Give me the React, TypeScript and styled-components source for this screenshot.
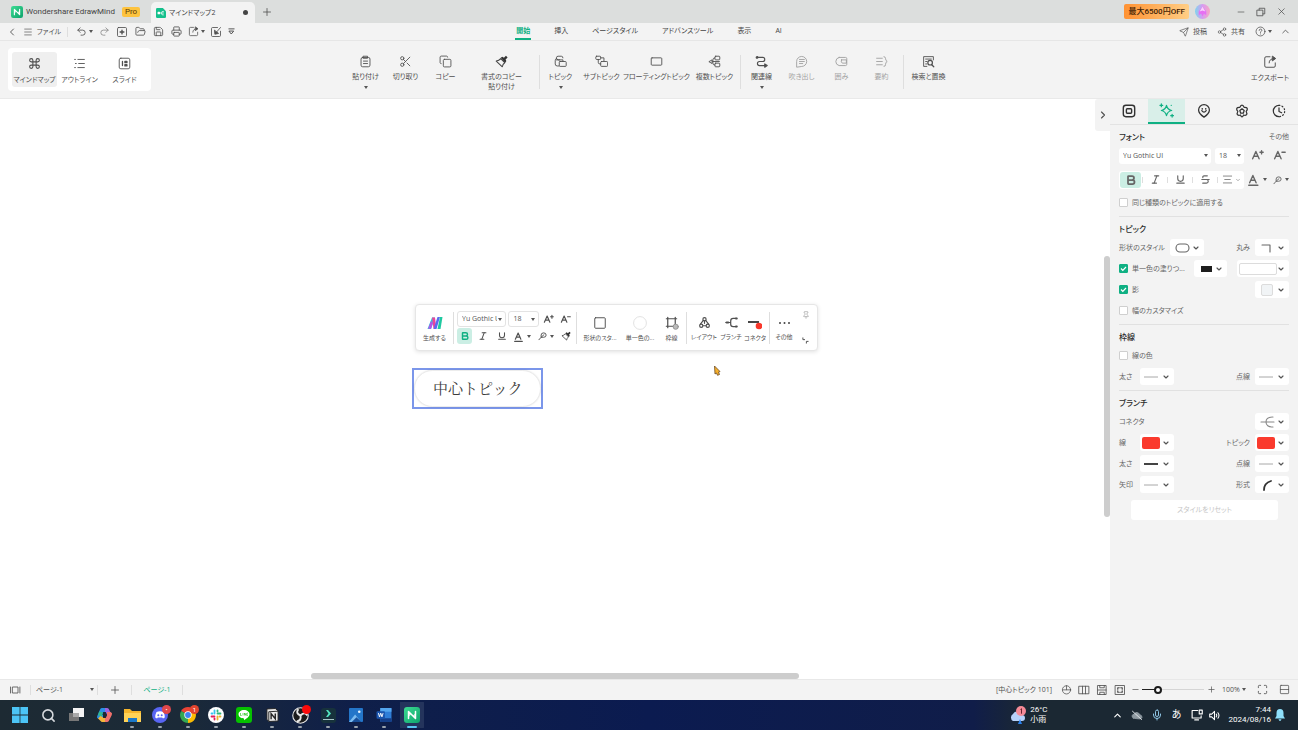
import React from "react";
import styled, { createGlobalStyle, css } from "styled-components";
import {
  ChevronLeft, ChevronRight, ChevronDown, ChevronUp, Menu, Undo2, Redo2, FolderOpen, Save, Printer,
  Command, Scissors, Copy, Send, Share2, Bold, Italic, Underline, Strikethrough, Plus, Minus, X,
  Search, Mic, Maximize, Pin,
} from "lucide-react";

const GlobalStyle = createGlobalStyle`
  *, *::before, *::after { box-sizing: border-box; }
  html, body { margin: 0; padding: 0; }
  body {
    font-family: "Open Sans", "Noto Sans CJK JP", sans-serif;
    font-feature-settings: "palt";
    font-size: 7px;
    line-height: 10px;
    color: #4f4f4f;
    overflow: hidden;
  }
  button, select, input { font: inherit; color: inherit; font-feature-settings: inherit; }
  button { border: 0; padding: 0; background: none; }
  svg { display: block; flex: none; }
`;

const GREEN = "#0fb083";
const COMPACT = `Roboto, "Noto Sans CJK JP", sans-serif`;

/* ---------- layout ---------- */
const Page = styled.div`
  display: flex;
  flex-direction: column;
  height: 100vh;
  background: #f3f3f3;
`;
const TitleBar = styled.header`
  display: flex;
  align-items: center;
  height: 23px;
  background: #dcdedd;
`;
const Spacer = styled.div`flex: 1;`;
const HomeTab = styled.button`
  display: flex;
  align-items: center;
  gap: 3px;
  width: 151px;
  height: 23px;
  padding-left: 11px;
  font-family: ${COMPACT};
  font-size: 8px;
  color: #444;
`;
const ProBadge = styled.span`
  margin-left: 4px;
  padding: 0 3px;
  border-radius: 2px;
  background: #fdc33f;
  color: #5b3a05;
`;
const DocTab = styled.button`
  display: flex;
  align-items: center;
  align-self: flex-end;
  gap: 3px;
  width: 104px;
  height: 21px;
  padding: 0 7px 0 5px;
  border-radius: 5px 5px 0 0;
  background: #f3f3f3;
  color: #444;
`;
const Dot = styled.i`
  width: 5px;
  height: 5px;
  margin-left: auto;
  border-radius: 50%;
  background: #444;
`;
const Promo = styled.button`
  height: 15px;
  padding: 0 4px;
  margin-right: 6px;
  border-radius: 2px;
  background: linear-gradient(90deg, #ff9233, #ffce85);
  color: #3d1c05;
  font-family: ${COMPACT};
  font-size: 8px;
  font-weight: 500;
  white-space: nowrap;
`;
const Avatar = styled.button`
  width: 15px;
  height: 15px;
  margin-right: 21px;
`;
const IconButton = styled.button<{ $w?: number; $h?: number; $on?: boolean }>`
  display: flex;
  align-items: center;
  justify-content: center;
  gap: 2px;
  width: ${(p) => p.$w ?? 18}px;
  height: ${(p) => p.$h ?? 16}px;
  flex: none;
  border-radius: 3px;
  white-space: nowrap;
  ${(p) => p.$on && css`background: #cbeee4;`}
`;
const MenuBar = styled.nav`
  display: grid;
  grid-template-columns: 1fr auto 1fr;
  height: 18px;
  border-bottom: 1px solid #e6e6e6;
`;
const Cluster = styled.div<{ $end?: boolean }>`
  display: flex;
  align-items: center;
  justify-content: ${(p) => (p.$end ? "flex-end" : "flex-start")};
  padding: 0 4px;
`;
const Rule = styled.i<{ $h?: number; $m?: number }>`
  width: 1px;
  height: ${(p) => p.$h ?? 10}px;
  margin: 0 ${(p) => p.$m ?? 0}px;
  background: #dedede;
  flex: none;
`;
const MenuTabs = styled.div`
  display: flex;
  gap: 22px;
`;
const MenuTab = styled.button<{ $on?: boolean }>`
  height: 17px;
  padding: 0 1px;
  border-bottom: 2px solid ${(p) => (p.$on ? GREEN : "transparent")};
  color: ${(p) => (p.$on ? GREEN : "#444")};
  font-weight: ${(p) => (p.$on ? 700 : 400)};
`;
const Ribbon = styled.div`
  display: grid;
  grid-template-columns: 1fr auto 1fr;
  height: 58px;
  border-bottom: 1px solid #e9e9e9;
`;
const ViewSwitch = styled.div`
  display: flex;
  align-self: center;
  justify-self: start;
  height: 43px;
  margin-left: 8px;
  padding: 4px;
  border-radius: 4px;
  background: #fff;
`;
const ViewButton = styled.button<{ $on?: boolean }>`
  display: flex;
  flex-direction: column;
  align-items: center;
  gap: 5px;
  width: 45px;
  padding-top: 5px;
  border-radius: 3px;
  background: ${(p) => (p.$on ? "#efefef" : "transparent")};
  white-space: nowrap;
`;
const Tools = styled.div<{ $end?: boolean }>`
  display: flex;
  align-items: flex-start;
  padding-top: 14px;
  ${(p) => p.$end && css`justify-self: end; padding-right: 4px;`}
`;
const Tool = styled.button<{ $w: number; $off?: boolean }>`
  display: flex;
  flex-direction: column;
  align-items: center;
  gap: 4px;
  width: ${(p) => p.$w}px;
  opacity: ${(p) => (p.$off ? 0.5 : 1)};
  white-space: nowrap;
`;
const Main = styled.main`
  display: flex;
  flex: 1;
  min-height: 0;
`;

/* ---------- canvas ---------- */
const Canvas = styled.section`
  position: relative;
  flex: 1;
  background: #fff;
  overflow: hidden;
`;
const CollapseTab = styled.button`
  position: absolute;
  top: 0;
  right: 0;
  display: flex;
  align-items: center;
  justify-content: center;
  width: 15px;
  height: 32px;
  border-radius: 3px 0 0 3px;
  background: #f3f3f3;
`;
const Thumb = styled.div<{ $vertical?: boolean }>`
  position: absolute;
  border-radius: 3px;
  background: #cdcdcd;
  ${(p) => p.$vertical
    ? css`right: 0; top: 27%; width: 6px; height: 45%;`
    : css`left: 28%; bottom: 0; width: 44%; height: 6px;`}
`;
const FloatBar = styled.div`
  position: absolute;
  left: 415px;
  top: 205px;
  display: flex;
  align-items: center;
  height: 47px;
  padding: 0 4px 0 0;
  border: 1px solid #e6e6e6;
  border-radius: 4px;
  background: #fff;
  box-shadow: 0 1px 4px rgba(0, 0, 0, 0.12);
`;
const FloatItem = styled.button<{ $w: number }>`
  display: flex;
  flex-direction: column;
  align-items: center;
  gap: 4px;
  width: ${(p) => p.$w}px;
  padding-top: 2px;
  font-size: 6px;
  line-height: 8px;
  white-space: nowrap;
`;
const FloatFont = styled.div`
  display: flex;
  flex-direction: column;
  gap: 1px;
  width: 122px;
  padding: 0 3px;
`;
const FloatLine = styled.div`
  display: flex;
  align-items: center;
  gap: 2px;
`;
const FloatCorner = styled.div`
  display: flex;
  flex-direction: column;
  gap: 18px;
  align-items: center;
  width: 15px;
`;
const Topic = styled.div`
  position: absolute;
  left: 412px;
  top: 269px;
  border: 2px solid #7b96ea;
`;
const Pill = styled.div`
  height: 37px;
  padding: 0 18px;
  border-radius: 19px;
  border: 1px solid #ececec;
  box-shadow: 0 0 2px rgba(0, 0, 0, 0.12);
  background: #fff;
  color: #3c3c3c;
  font-size: 15px;
  line-height: 36px;
  font-family: "Liberation Serif", "Noto Serif CJK JP", "Noto Sans CJK JP", serif;
  font-feature-settings: normal;
`;
const Cursor = styled.svg`
  position: absolute;
  left: 713px;
  top: 266px;
`;

/* ---------- side panel ---------- */
const Panel = styled.aside`
  width: 188px;
  flex: none;
  background: #f3f3f3;
`;
const PanelTabs = styled.div`
  display: grid;
  grid-template-columns: repeat(5, 1fr);
  height: 26px;
  border-bottom: 1px solid #e3e3e3;
`;
const PanelTab = styled.button<{ $on?: boolean }>`
  display: flex;
  align-items: center;
  justify-content: center;
  color: ${(p) => (p.$on ? GREEN : "#333")};
  background: ${(p) => (p.$on ? "#d9efe9" : "transparent")};
  border-bottom: 2px solid ${(p) => (p.$on ? GREEN : "transparent")};
`;
const Section = styled.section`
  margin: 0 9px;
  padding: 3px 0;
  & + & { border-top: 1px solid #e1e1e1; }
`;
const Heading = styled.h2`
  display: flex;
  align-items: center;
  justify-content: space-between;
  height: 17px;
  margin: 0;
  font-size: 8px;
  font-weight: 500;
  color: #2b2b2b;
`;
const More = styled.a`
  font-size: 7px;
  font-weight: 400;
  color: #666;
  text-decoration: none;
`;
const Row = styled.div<{ $gap?: number; $style?: boolean }>`
  display: flex;
  align-items: center;
  gap: ${(p) => p.$gap ?? 5}px;
  height: 21px;
  margin: ${(p) => (p.$style ? "3px 0 2px" : "0")};
  color: #666;
  white-space: nowrap;
`;
const Label = styled.span<{ $w?: number }>`
  min-width: ${(p) => p.$w ?? 0}px;
`;
const Check = styled.label<{ $w?: number }>`
  display: flex;
  align-items: center;
  gap: 4px;
  min-width: ${(p) => p.$w ?? 0}px;
`;
const Box = styled.input`
  appearance: none;
  width: 9px;
  height: 9px;
  margin: 0;
  border: 1px solid #cfcfcf;
  border-radius: 1px;
  background: #fff;
  &:checked {
    border-color: ${GREEN};
    background: ${GREEN} url("data:image/svg+xml,%3Csvg xmlns='http://www.w3.org/2000/svg' viewBox='0 0 9 9'%3E%3Cpath d='M2 4.5l1.8 1.8L7 3' fill='none' stroke='white' stroke-width='1.2'/%3E%3C/svg%3E") center / 9px no-repeat;
  }
`;
const Picker = styled.button<{ $w?: number }>`
  display: flex;
  align-items: center;
  justify-content: space-between;
  width: ${(p) => p.$w ?? 34}px;
  height: 17px;
  padding: 0 4px 0 2px;
  border-radius: 3px;
  background: #fff;
`;
const Swatch = styled.i<{ $c: string; $w?: number; $h?: number; $inset?: number; $line?: boolean }>`
  width: ${(p) => p.$w ?? 18}px;
  height: ${(p) => p.$h ?? 12}px;
  margin-left: ${(p) => p.$inset ?? 0}px;
  border-radius: ${(p) => (p.$h === 6 ? 0 : 2)}px;
  background: ${(p) => p.$c};
  border: ${(p) => (p.$line ? "1px solid #dcdcdc" : "0")};
`;
const SelectWrap = styled.span<{ $w: number; $line?: boolean; $clear?: boolean }>`
  display: grid;
  align-items: center;
  width: ${(p) => p.$w}px;
  height: 16px;
  border-radius: 3px;
  background: ${(p) => (p.$clear ? "none" : "#fff")};
  border: ${(p) => (p.$line ? "1px solid #e3e3e3" : "0")};
  & > * { grid-area: 1 / 1; }
  & > svg { justify-self: end; margin-right: 3px; pointer-events: none; }
`;
const Select = styled.select`
  appearance: none;
  width: 100%;
  height: 14px;
  border: 0;
  padding: 0 8px 0 4px;
  background: none;
  color: #555;
`;
const StyleGroup = styled.div`
  display: flex;
  align-items: center;
  width: 125px;
  height: 18px;
  padding: 0 1px;
  border-radius: 3px;
  background: #fff;
`;
const Reset = styled.button`
  display: block;
  width: 147px;
  height: 20px;
  margin: 5px 0 0 12px;
  border-radius: 3px;
  background: #fff;
  color: #c6c6c6;
`;

/* ---------- status bar and taskbar ---------- */
const StatusBar = styled.footer`
  display: flex;
  align-items: center;
  height: 21px;
  padding-bottom: 1px;
  border-top: 1px solid #e8e8e8;
`;
const PageTab = styled.button`
  width: 50px;
  color: ${GREEN};
`;
const Slider = styled.input`
  appearance: none;
  width: 62px;
  height: 9px;
  margin: 0 1px;
  background: linear-gradient(90deg, #222 0 25%, #d5d5d5 25%) center / 100% 1px no-repeat;
  &::-webkit-slider-thumb {
    appearance: none;
    width: 8px;
    height: 8px;
    border: 2px solid #1c1c1c;
    border-radius: 50%;
    background: #fff;
  }
`;
const TaskBar = styled.footer`
  display: flex;
  align-items: center;
  height: 30px;
  padding: 0 13px 0 6px;
  background: linear-gradient(90deg, #1d2a33 0, #1b2a38 14%, #0f1f49 27%, #0b1b50 50%, #101d49 75%, #1b2833 79%);
  color: #fff;
  font-family: ${COMPACT};
`;
const App16 = styled.button<{ $on?: boolean; $open?: boolean }>`
  position: relative;
  display: flex;
  align-items: center;
  justify-content: center;
  width: 28px;
  height: 26px;
  border-radius: 3px;
  background: ${(p) => (p.$on ? "linear-gradient(90deg, transparent 2px, #24345c 2px 26px, transparent 26px)" : "none")};
  &::after {
    content: "";
    position: absolute;
    bottom: 0;
    left: ${(p) => (p.$on ? 9 : 12)}px;
    right: ${(p) => (p.$on ? 9 : 12)}px;
    height: 2px;
    border-radius: 1px;
    background: ${(p) => (p.$on ? "#58c8f2" : p.$open ? "#9aa3ad" : "transparent")};
  }
`;
const Badge = styled.i<{ $c: string }>`
  position: absolute;
  top: 3px;
  right: 3px;
  width: 9px;
  height: 9px;
  border-radius: 50%;
  background: ${(p) => p.$c};
  color: #fff;
  font-size: 6px;
  line-height: 9px;
  font-style: normal;
  text-align: center;
`;
const Weather = styled.button`
  display: flex;
  align-items: center;
  gap: 4px;
  margin-right: 61px;
  font-size: 8px;
  text-align: left;
  color: #fff;
`;
const Clock = styled.div`
  margin: 0 4px 0 8px;
  font-size: 8px;
  text-align: right;
`;
const Ime = styled.span`
  width: 20px;
  font-size: 10px;
  text-align: center;
`;

/* ---------- drawings ---------- */
const L = { size: 11, strokeWidth: 1.8 };

function Line({ children, size = 13, sw = 1.1, vb = 16 }: { children: React.ReactNode; size?: number; sw?: number; vb?: number }) {
  return (
    <svg width={size} height={size} viewBox={`0 0 ${vb} ${vb}`} fill="none" stroke="currentColor" strokeWidth={sw} strokeLinejoin="round" strokeLinecap="round" aria-hidden>
      {children}
    </svg>
  );
}
const Caret = () => <svg width="4" height="3" viewBox="0 0 4 3" aria-hidden><path d="M0 0h4L2 3z" fill="#555" /></svg>;
const Chev = () => <ChevronDown size={8} strokeWidth={3.5} color="#555" />;
const Dash = ({ c = "#a8a8a8", h = 1 }: { c?: string; h?: number }) => (
  <svg width="18" height="4" viewBox="0 0 18 4" aria-hidden><path d="M2 2h14" stroke={c} strokeWidth={h} /></svg>
);
const EdrawLogo = ({ size = 12 }: { size?: number }) => (
  <svg width={size} height={size} viewBox="0 0 16 16" aria-hidden>
    <defs><linearGradient id="ed" x1="0" y1="0" x2="1" y2="1"><stop stopColor="#3ddc93" /><stop offset="1" stopColor="#0ea36c" /></linearGradient></defs>
    <rect width="16" height="16" rx="3" fill="url(#ed)" />
    <path d="M4.500 11.500v-7l7 7v-7" stroke="#fff" fill="none" strokeWidth="1.500" strokeLinejoin="round" strokeLinecap="round" /><path d="M4.500 5v5l2.500-2.500zM11.500 11V6L9 8.500z" fill="#fff" opacity=".75" />
  </svg>
);
const DocLogo = () => (
  <svg width="10" height="10" viewBox="0 0 16 16" aria-hidden>
    <path d="M2 0h9l5 5v9q0 2-2 2H2q-2 0-2-2V2Q0 0 2 0z" fill="#14c08c" />
    <rect x="2.500" y="6" width="4" height="4" rx="1" fill="#fff" /><path d="M6.500 8H9M12.500 5.500H11q-2 0-2 1.500v2.500q0 1.500 2 1.500h1.500M9 8h3.500" stroke="#fff" fill="none" strokeWidth="1.200" />
  </svg>
);
const NewIcon = () => <Line size={12}><rect x="2" y="2" width="12" height="12" rx="1.500" /><path d="M8 5.500v5M5.500 8h5" strokeWidth="1.800" /></Line>;
const ExportIcon = ({ size = 12 }: { size?: number }) => <Line size={size}><path d="M8 2H3.500Q2 2 2 3.500v9Q2 14 3.500 14h9q1.500 0 1.500-1.500V9M7 9q0-5 6-5" /><path d="M11 1.500L14.500 4 11 6.500z" fill="currentColor" /></Line>;
const ImportIcon = () => <Line size={12}><path d="M10 2H3.500Q2 2 2 3.500v9Q2 14 3.500 14h9q1.500 0 1.500-1.500V7M14 2L8 9" /><path d="M6 6l.5 5 4.500-1z" fill="currentColor" /></Line>;
const OutlineIcon = () => <Line><path d="M6 3h8M7 8h7M6 13h8M2 3h1M3 8h1M2 13h1" /></Line>;
const SlideIcon = () => <Line><rect x="1.500" y="1.500" width="13" height="13" rx="2" /><path d="M5.500 5.500v5M8.500 5.500h2.500v1.500H8.500zM8.500 9.500h2.500V11H8.500z" strokeWidth="1.600" /></Line>;
const PasteIcon = () => <Line><rect x="2.500" y="3" width="11" height="11.500" rx="2" /><path d="M5.500 1.500h5V4h-5zM5.500 7.500h5M5.500 10.500h5" /></Line>;
const BrushIcon = ({ size = 13 }: { size?: number }) => (
  <svg width={size} height={size} viewBox="0 0 16 16" aria-hidden><path d="M1.500 7.500Q5 7 7 4.500L12 9.500Q9.500 11 9 14.500z" fill="none" stroke="#444" strokeWidth="1.300" strokeLinejoin="round" /><path d="M7 3.500L9 2l2 1.500L13.500 1 15.500 3 13 5.500l1 2L12.500 9.500z" fill="#333" /></svg>
);
const TopicIcon = () => <Line><path d="M11 3.500Q11 1.500 9 1.500H5Q3 1.500 3 3.500T5 6h2M3 4Q1.500 5 1.500 7v4Q1.500 13.500 4 13.500h2" /><rect x="6.500" y="8" width="8.500" height="6" rx="1" /><path d="M3 6h8v2" /></Line>;
const SubIcon = () => <Line><rect x="1" y="1.500" width="6" height="4" rx="1" /><path d="M4 5.500V9q0 2 2 2h1M7 3.500h4V7" /><rect x="7" y="8" width="8.500" height="6" rx="1" /></Line>;
const FloatIcon = () => <Line><rect x="1.500" y="3.500" width="13" height="9" rx="1" /></Line>;
const MultiIcon = () => <Line><rect x="8.500" y="1.500" width="6" height="4.500" rx="1" /><rect x="8.500" y="10" width="6" height="4.500" rx="1" /><path d="M8.500 3.500Q6 3.500 6 6v4q0 2.500 2.500 2.500M6 8h8M1.500 8L5 6v4z" /></Line>;
const RelIcon = () => <Line sw={1.4}><path d="M3 3h6.500q2.500 0 2.500 2.500T9.500 8h-4Q3 8 3 10.500T5.500 13H13" /><circle cx="2.500" cy="3" r="1" fill="currentColor" /><path d="M12 11l3 2-3 2z" fill="currentColor" /></Line>;
const CallIcon = () => <Line><path d="M2 14.500V8a6.200 6.200 0 1 1 6.200 6.200zM5.500 5.500h6M5.500 8h6M5.500 10.500h4" /></Line>;
const RoundIcon = () => <Line><path d="M5 3h8q1.500 0 1.500 1.500v7Q14.500 13 13 13H5Q1 12 1 8t4-5z" /><path d="M8 6h6v4H9Q7 9 8 6z" /></Line>;
const SumIcon = () => <Line><path d="M2 4h7M2 8h7M2 12h7M11 2q2 0 2 2.500T15 8q-2 .5-2 3.500t-2 2.500" /></Line>;
const FindIcon = () => <Line><path d="M6 14H2V2h12v4M4.500 5h7M4.500 8H6M4.500 11H6" /><circle cx="10" cy="9.500" r="2.800" strokeWidth="1.500" /><path d="M12 12l2.500 2.500" strokeWidth="1.500" /></Line>;
const HelpIcon = () => <Line size={11}><circle cx="8" cy="8" r="6.500" /><path d="M6 6.500Q6 4.500 8 4.500t2 1.800Q10 7.500 8 8.500v.8M8 11.500v.2" /></Line>;
const RestoreIcon = () => <Line size={10} sw={1.3}><rect x="2" y="5" width="9" height="9" /><path d="M5 5V2h9v9h-3" /></Line>;
const LetterA = ({ sup, bar, size = 12 }: { sup?: "plus" | "minus"; bar?: boolean; size?: number }) => (
  <Line size={size} sw={1.7}>
    <path d="M2 12L6 3l4 9M3.500 9h5" />
    {sup === "plus" && <path d="M11 4h4M13 2v4" />}
    {sup === "minus" && <path d="M11 4h4" />}
    {bar && <path d="M1 15h11" strokeWidth="2" />}
  </Line>
);
const PenIcon = () => <Line size={10} sw={1.5}><path d="M5 10V6.500Q5 3 9 3q4 0 4 3.500T9 10H5l-3.500 4M5.500 9.500L9.500 6" /></Line>;
const AlignIcon = () => <Line size={11}><path d="M2 3h12M4 8h8M2 13h12" /></Line>;
const AiLogo = () => (
  <svg width="16" height="14" viewBox="0 0 16 14" aria-hidden>
    <path d="M.5 13L5 1.500h3L4 13z" fill="#29c7dc" /><path d="M5 1.500h3l1 8L6.500 13z" fill="#e9459b" /><path d="M6.500 13l4-12h2.500L9.500 13z" fill="#5a6af0" /><path d="M10.500 13L13 1h2.500l-2 12z" fill="#1fc9a0" /><path d="M1 13q2-1 3 0l2-6-2-2z" fill="#b653e8" />
  </svg>
);
const FrameIcon = () => (
  <Line size={15} sw={1.3}><path d="M4 2.500v11M12 2.500v11M2.500 4h11M2.500 12h11" /><circle cx="12.500" cy="12.500" r="2.800" fill="#bbb" stroke="#888" strokeWidth=".8" /></Line>
);
const LayoutIcon = () => <Line sw={1.4}><circle cx="8" cy="4" r="2" /><circle cx="4" cy="12" r="2" /><circle cx="12" cy="12" r="2" /><path d="M6.500 5.500L3 10M9.500 5.500l3.500 4.500M8 6v3M6 12h4" /></Line>;
const BranchIcon = () => <Line sw={1.5}><path d="M1 8h6M14 3h-4Q7 3 7 6v4q0 3 3 3h4" /><path d="M2 8h2M13.500 3h1M13.500 13h1" strokeWidth="2.500" /></Line>;
const ConnIcon = () => <svg width="14" height="14" viewBox="0 0 14 14" aria-hidden><path d="M0 6h11" stroke="#333" strokeWidth="1.800" /><circle cx="11" cy="10" r="3.300" fill="#f9382c" /></svg>;
const DotsIcon = () => <svg width="13" height="13" viewBox="0 0 13 13" fill="#444" aria-hidden><circle cx="2" cy="7" r="1" /><circle cx="6.500" cy="7" r="1" /><circle cx="11" cy="7" r="1" /></svg>;

const Windows = () => <svg width="16" height="16" viewBox="0 0 16 16" fill="#4cc4f5" aria-hidden><path d="M0 0h7.600v7.600H0zM8.400 0H16v7.600H8.400zM0 8.400h7.600V16H0zM8.400 8.400H16V16H8.400z" /></svg>;
const TaskView = () => <svg width="17" height="14" viewBox="0 0 17 14" aria-hidden><rect x="5" y="0" width="11" height="9" fill="#f3f3f3" /><rect x="1" y="5" width="10" height="8" fill="#777" /><rect x="5" y="5" width="6" height="4" fill="#aaa" /></svg>;
const Copilot = () => (
  <svg width="17" height="16" viewBox="0 0 17 16" fill="none" strokeWidth="4" strokeLinejoin="round" aria-hidden>
    <path d="M9 3H6L3 10h4" stroke="#2a8fe6" /><path d="M9 3h2l2 4" stroke="#9b63e0" /><path d="M8 13h3l3-6h-3" stroke="#f0716c" /><path d="M3.500 10l3 3H9" stroke="#f3b63b" /><path d="M4 9l1-4" stroke="#31b88b" />
  </svg>
);
const Explorer = () => <svg width="17" height="15" viewBox="0 0 17 15" aria-hidden><path d="M0 1h6l2 2h9v11H0z" fill="#f5b52c" /><path d="M0 5h17v9H0z" fill="#ffd257" /><path d="M4 10h9v4H4z" fill="#1b78c9" /></svg>;
const Discord = () => <svg width="16" height="16" viewBox="0 0 16 16" aria-hidden><circle cx="8" cy="8" r="8" fill="#5865f2" /><path d="M4.500 5q3.500-1.500 7 0 1.500 3 1.300 5.500L11 11.500l-.8-1H5.800l-.8 1-1.800-1Q3 8 4.500 5z" fill="#fff" /><circle cx="6.300" cy="8.200" r="1" fill="#5865f2" /><circle cx="9.700" cy="8.200" r="1" fill="#5865f2" /></svg>;
const Chrome = () => <svg width="16" height="16" viewBox="0 0 16 16" aria-hidden><path d="M8 8L1.100 4A8 8 0 0 1 14.900 4z" fill="#ea4335" /><path d="M8 8L1.100 4A8 8 0 0 0 8 16z" fill="#34a853" /><path d="M8 8l6.900-4A8 8 0 0 1 8 16z" fill="#fbbc04" /><circle cx="8" cy="8" r="3.700" fill="#fff" /><circle cx="8" cy="8" r="2.900" fill="#3f82f0" /></svg>;
const Slack = () => <svg width="16" height="16" viewBox="0 0 16 16" aria-hidden><circle cx="8" cy="8" r="8" fill="#fff" /><g strokeWidth="1.800" strokeLinecap="round"><path d="M6.500 3.500v3" stroke="#36c5f0" /><path d="M3.500 6.500h1" stroke="#36c5f0" /><path d="M9.500 6.500h3" stroke="#2eb67d" /><path d="M9.500 3.500v1" stroke="#2eb67d" /><path d="M9.500 9.500v3" stroke="#ecb22e" /><path d="M11.500 9.500h1" stroke="#ecb22e" /><path d="M3.500 9.500h3" stroke="#e01e5a" /><path d="M6.500 11.500v1" stroke="#e01e5a" /></g></svg>;
const LineApp = () => <svg width="16" height="16" viewBox="0 0 16 16" aria-hidden><rect width="16" height="16" rx="3" fill="#06c100" /><path d="M8 3c3 0 5.500 1.900 5.500 4.300 0 2.700-4 5-5.500 6v-1.800C5 11.500 2.500 9.700 2.500 7.300S5 3 8 3z" fill="#fff" /><path d="M4.500 6v2.500h1.200M7 6v2.500M8.500 8.500V6L10 8.500V6M11.800 6H11v2.500h.8" stroke="#06c100" strokeWidth=".6" fill="none" /></svg>;
const Notion = () => <svg width="13" height="14" viewBox="0 0 14 15" aria-hidden><path d="M1 1l9-.5L13 3v11l-10 .5L1 12z" fill="#e9e9e9" stroke="#222" /><path d="M3 4l10-.6M3 4v10" stroke="#222" /><path d="M5.500 12V6l4.500 5.500V6" stroke="#222" strokeWidth="1.500" fill="none" /></svg>;
const Obs = () => <svg width="17" height="17" viewBox="0 0 16 16" aria-hidden><circle cx="8" cy="8" r="7.300" fill="#1b1b1b" stroke="#e8e8e8" strokeWidth="1" /><path d="M8 8Q3 6 6 2M8 8q4-4 6.500 0M8 8q1 5-3.500 5.500" stroke="#e8e8e8" strokeWidth="1.800" fill="none" /></svg>;
const Filmora = () => <svg width="15" height="15" viewBox="0 0 15 15" aria-hidden><rect width="15" height="15" rx="3" fill="#17323c" /><path d="M5 2h2l3 3.500-3 3.500H5l2.500-3.500z" fill="#53e5c0" /><path d="M2 11.500h11" stroke="#a9c7c9" /></svg>;
const Photos = () => <svg width="14" height="14" viewBox="0 0 15 15" aria-hidden><rect width="15" height="15" rx="1" fill="#2476c9" /><path d="M0 15l6.500-8L13 15z" fill="#7cbcf0" /><path d="M3 15l5-5 5.500 5z" fill="#184f9a" /><circle cx="11" cy="4" r="1.400" fill="#e9f5ff" /></svg>;
const Word = () => <svg width="16" height="14" viewBox="0 0 16 15" aria-hidden><rect x="4" width="12" height="15" rx="1" fill="#2f7ed8" /><path d="M4 0h12v4H4z" fill="#53a5ee" /><path d="M4 11h12v4H4z" fill="#153f8a" /><rect y="3.500" width="9" height="8" rx="1" fill="#1b55ae" /><path d="M2 5.500l1.200 4 1.300-4 1.300 4L7 5.500" stroke="#fff" fill="none" /></svg>;

/* ---------- page ---------- */
function Pick({ icon, w, label }: { icon: React.ReactNode; w?: number; label: string }) {
  return <Picker $w={w} aria-label={label} aria-haspopup="listbox">{icon}<Chev /></Picker>;
}
function Combo({ w, value, label, line, clear }: { w: number; value: string; label: string; line?: boolean; clear?: boolean }) {
  return <SelectWrap $w={w} $line={line} $clear={clear}><Select aria-label={label}><option>{value}</option></Select><Caret /></SelectWrap>;
}

export default function App() {
  return (
    <Page>
      <GlobalStyle />
      <TitleBar>
        <HomeTab><EdrawLogo />Wondershare EdrawMind<ProBadge>Pro</ProBadge></HomeTab>
        <DocTab><DocLogo />マインドマップ2<Dot /></DocTab>
        <IconButton $w={24} aria-label="新しいタブ"><Plus size={12} strokeWidth={1.6} /></IconButton>
        <Spacer />
        <Promo>最大6500円OFF</Promo>
        <Avatar aria-label="アカウント">
          <svg width="15" height="15" viewBox="0 0 16 16" aria-hidden>
            <defs><linearGradient id="av"><stop stopColor="#7fd4ee" /><stop offset=".5" stopColor="#d79bf0" /><stop offset="1" stopColor="#f7a6c4" /></linearGradient></defs>
            <circle cx="8" cy="8" r="8" fill="url(#av)" /><path d="M4 12V8l4-5 4 5v4l-2.500-2L8 13l-1.500-3z" fill="#e66ff2" /><path d="M8 3l3 5-3-1-3 1z" fill="#fff" opacity=".7" />
          </svg>
        </Avatar>
        <IconButton $w={20} aria-label="最小化"><Minus size={10} strokeWidth={1.6} /></IconButton>
        <IconButton $w={20} aria-label="元に戻す"><RestoreIcon /></IconButton>
        <IconButton $w={20} aria-label="閉じる"><X size={11} strokeWidth={1.6} /></IconButton>
        <Rule $h={0} $m={3} />
      </TitleBar>

      <MenuBar>
        <Cluster>
          <IconButton $w={16} aria-label="戻る"><ChevronLeft size={12} strokeWidth={1.8} /></IconButton>
          <IconButton $w={16} aria-label="メニュー"><Menu size={10} strokeWidth={1.6} /></IconButton>
          <IconButton $w={26}>ファイル</IconButton>
          <Rule $m={5} />
          <IconButton $w={22} aria-label="元に戻す"><Undo2 {...L} /><Caret /></IconButton>
          <IconButton aria-label="やり直し"><Redo2 {...L} color="#888" /></IconButton>
          <IconButton aria-label="新規"><NewIcon /></IconButton>
          <IconButton aria-label="開く"><FolderOpen {...L} /></IconButton>
          <IconButton aria-label="保存"><Save {...L} /></IconButton>
          <IconButton aria-label="印刷"><Printer {...L} /></IconButton>
          <IconButton $w={22} aria-label="書き出し"><ExportIcon size={11} /><Caret /></IconButton>
          <IconButton aria-label="取り込み"><ImportIcon /></IconButton>
          <IconButton $w={12} aria-label="その他"><Line size={7} vb={8}><path d="M1 1h6M1.500 3.500h5L4 6.500z" /></Line></IconButton>
        </Cluster>
        <MenuTabs>
          {["開始", "挿入", "ページスタイル", "アドバンスツール", "表示", "AI"].map((t, i) => <MenuTab key={t} $on={i === 0}>{t}</MenuTab>)}
        </MenuTabs>
        <Cluster $end>
          <IconButton $w={38}><Send size={10} strokeWidth={1.6} />&nbsp;投稿</IconButton>
          <IconButton $w={38}><Share2 size={10} strokeWidth={1.6} />&nbsp;共有</IconButton>
          <IconButton $w={26} aria-label="ヘルプ"><HelpIcon /><Caret /></IconButton>
          <IconButton aria-label="リボンをたたむ"><ChevronUp size={11} strokeWidth={1.8} /></IconButton>
        </Cluster>
      </MenuBar>

      <Ribbon>
        <ViewSwitch>
          <ViewButton $on><Command size={13} strokeWidth={2} />マインドマップ</ViewButton>
          <ViewButton><OutlineIcon />アウトライン</ViewButton>
          <ViewButton><SlideIcon />スライド</ViewButton>
        </ViewSwitch>
        <Tools>
          <Tool $w={40}><PasteIcon />貼り付け<Caret /></Tool>
          <Tool $w={40}><Scissors size={13} strokeWidth={1.6} />切り取り</Tool>
          <Tool $w={40}><Copy size={13} strokeWidth={1.6} />コピー</Tool>
          <Tool $w={72}><BrushIcon /><span>書式のコピー<br />貼り付け</span></Tool>
          <Rule $h={34} $m={1} />
          <Tool $w={40}><TopicIcon />トピック<Caret /></Tool>
          <Tool $w={42}><SubIcon />サブトピック</Tool>
          <Tool $w={68}><FloatIcon />フローティングトピック</Tool>
          <Tool $w={48}><MultiIcon />複数トピック</Tool>
          <Rule $h={34} $m={1} />
          <Tool $w={40}><RelIcon />関連線<Caret /></Tool>
          <Tool $w={40} $off><CallIcon />吹き出し</Tool>
          <Tool $w={40} $off><RoundIcon />囲み</Tool>
          <Tool $w={40} $off><SumIcon />要約</Tool>
          <Rule $h={34} $m={1} />
          <Tool $w={48}><FindIcon />検索と置換</Tool>
        </Tools>
        <Tools $end>
          <Tool $w={48}><ExportIcon size={14} />エクスポート</Tool>
        </Tools>
      </Ribbon>

      <Main>
        <Canvas>
          <CollapseTab aria-label="パネルを閉じる"><ChevronRight size={12} strokeWidth={2.2} /></CollapseTab>
          <FloatBar>
            <FloatItem $w={37}><AiLogo />生成する</FloatItem>
            <Rule $h={32} />
            <FloatFont>
              <FloatLine>
                <Combo w={50} value="Yu Gothic UI" label="フォント" line />
                <Combo w={31} value="18" label="サイズ" line />
                <IconButton $w={15} aria-label="拡大"><LetterA sup="plus" size={11} /></IconButton>
                <IconButton $w={15} aria-label="縮小"><LetterA sup="minus" size={11} /></IconButton>
              </FloatLine>
              <FloatLine>
                <IconButton $w={15} $on aria-label="太字"><Bold size={10} strokeWidth={3.5} color={GREEN} /></IconButton>
                <IconButton $w={17} aria-label="斜体"><Italic size={10} strokeWidth={2.5} /></IconButton>
                <IconButton $w={17} aria-label="下線"><Underline size={10} strokeWidth={2.5} /></IconButton>
                <IconButton $w={21} aria-label="文字色"><LetterA bar size={11} /><Caret /></IconButton>
                <IconButton $w={21} aria-label="蛍光ペン"><PenIcon /><Caret /></IconButton>
                <IconButton $w={15} aria-label="書式のコピー"><BrushIcon size={10} /></IconButton>
              </FloatLine>
            </FloatFont>
            <Rule $h={32} />
            <FloatItem $w={46}><Line size={14}><rect x="2" y="2" width="12" height="12" rx="1" /></Line>形状のスタ...</FloatItem>
            <FloatItem $w={34}><svg width="14" height="14" viewBox="0 0 14 14" aria-hidden><circle cx="7" cy="7" r="6.400" fill="#fff" stroke="#e2e2e2" /></svg>単一色の...</FloatItem>
            <FloatItem $w={29}><FrameIcon />枠線</FloatItem>
            <Rule $h={32} />
            <FloatItem $w={34}><LayoutIcon />レイアウト</FloatItem>
            <FloatItem $w={20}><BranchIcon />ブランチ</FloatItem>
            <FloatItem $w={28}><ConnIcon />コネクタ</FloatItem>
            <Rule $h={32} />
            <FloatItem $w={28}><DotsIcon />その他</FloatItem>
            <FloatCorner><Pin size={8} strokeWidth={1.6} color="#888" /><Line size={7} vb={8}><path d="M1 1v2h2M5 7V5h2" /></Line></FloatCorner>
          </FloatBar>
          <Topic><Pill>中心トピック</Pill></Topic>
          <Cursor width="8" height="11" viewBox="0 0 8 11" aria-hidden><path d="M1.500 1L7 6.500 5.500 7l1 2.500-2 .8-1-2.300L2 9z" fill="#f7b02b" stroke="#6b4a24" strokeWidth=".8" /></Cursor>
          <Thumb $vertical />
          <Thumb />
        </Canvas>

        <Panel>
          <PanelTabs>
            <PanelTab aria-label="ページ"><Line size={14} sw={1.6}><rect x="1.500" y="1.500" width="13" height="13" rx="3" /><rect x="5" y="5.500" width="6" height="5" rx="1" /></Line></PanelTab>
            <PanelTab $on aria-label="スタイル"><Line size={15} sw={1.3}><path d="M8 2.500Q9 7 13.500 8 9 9 8 13.500 7 9 2.500 8 7 7 8 2.500z" /><path d="M2.500 1v3M1 2.500h3M14 12v3M12.500 13.500h3M13 2.500h.1" /></Line></PanelTab>
            <PanelTab aria-label="アイコン"><Line size={14} sw={1.4}><path d="M8 15Q2 11 1.800 7a6.200 6.200 0 0 1 12.400 0Q14 11 8 15zM5.500 7.500Q8 11 10.500 7.500" /><path d="M6 5.500v.3M10 5.500v.3" strokeWidth="1.800" /></Line></PanelTab>
            <PanelTab aria-label="クリップアート"><Line size={14} sw={1.4}><path d="M8 1.200q1.600 0 2.400 2.600 2.800-.3 3.600 1.200.6 1.500-1.200 3.500 1.400 2.500.3 3.700-1.300 1.200-3.300.3Q8.800 14.800 8 14.800t-1.800-2.300q-2 .9-3.300-.3-1.100-1.200.3-3.700Q1.400 6.500 2 5q.8-1.500 3.600-1.200Q6.400 1.200 8 1.200z" /><path d="M8 5.500l2.500 2-1 3h-3l-1-3z" /></Line></PanelTab>
            <PanelTab aria-label="履歴"><Line size={14} sw={1.4}><path d="M8 1.500A6.500 6.500 0 0 0 8 14.500M8 4.500V8.500l3 1.500" /><path d="M8 1.500A6.500 6.500 0 0 1 8 14.500" strokeDasharray="1 2.600" /></Line></PanelTab>
          </PanelTabs>

          <Section>
            <Heading>フォント<More href="#more">その他</More></Heading>
            <Row $gap={4}>
              <Combo w={92} value="Yu Gothic UI" label="フォント" />
              <Combo w={29} value="18" label="サイズ" />
              <IconButton aria-label="拡大"><LetterA sup="plus" size={13} /></IconButton>
              <IconButton aria-label="縮小"><LetterA sup="minus" size={13} /></IconButton>
            </Row>
            <Row $gap={2} $style>
              <StyleGroup>
                <IconButton $w={21} $on aria-label="太字"><Bold size={12} strokeWidth={3.5} /></IconButton>
                <Rule $h={6} $m={1} />
                <IconButton $w={22} aria-label="斜体"><Italic size={11} strokeWidth={2.5} /></IconButton>
                <Rule $h={6} $m={1} />
                <IconButton $w={22} aria-label="下線"><Underline size={11} strokeWidth={2.5} /></IconButton>
                <Rule $h={6} $m={1} />
                <IconButton $w={22} aria-label="取り消し線"><Strikethrough size={11} strokeWidth={2.5} /></IconButton>
                <Rule $h={6} $m={1} />
                <IconButton $w={24} aria-label="配置"><AlignIcon /><ChevronDown size={6} /></IconButton>
              </StyleGroup>
              <IconButton $w={23} aria-label="文字色"><LetterA bar size={13} /><Caret /></IconButton>
              <IconButton $w={20} aria-label="蛍光ペン"><PenIcon /><Caret /></IconButton>
            </Row>
            <Row><Check><Box type="checkbox" />同じ種類のトピックに適用する</Check></Row>
          </Section>

          <Section>
            <Heading>トピック</Heading>
            <Row><Label $w={45}>形状のスタイル</Label><Pick label="形状のスタイル" icon={<Line size={18} vb={18}><rect x="4" y="5" width="13" height="8" rx="4" /></Line>} /><Spacer />丸み<Pick label="丸み" icon={<Line size={18} vb={18}><path d="M5 6h8v7" /></Line>} /></Row>
            <Row><Check $w={70}><Box type="checkbox" defaultChecked />単一色の塗りつ...</Check><Pick label="塗りつぶし" icon={<Swatch $c="#1e1e1e" $w={11} $h={6} $inset={5} />} /><Spacer /><Pick w={53} label="塗りつぶしの色" icon={<Swatch $c="#fff" $w={38} $line />} /></Row>
            <Row><Check><Box type="checkbox" defaultChecked />影</Check><Spacer /><Pick label="影の色" icon={<Swatch $c="#f1f4f6" $w={12} $inset={4} $line />} /></Row>
            <Row><Check><Box type="checkbox" />幅のカスタマイズ</Check></Row>
          </Section>

          <Section>
            <Heading>枠線</Heading>
            <Row><Check><Box type="checkbox" />線の色</Check></Row>
            <Row><Label $w={16}>太さ</Label><Pick label="枠線の太さ" icon={<Dash />} /><Spacer />点線<Pick label="枠線の点線" icon={<Dash />} /></Row>
          </Section>

          <Section>
            <Heading>ブランチ</Heading>
            <Row>コネクタ<Spacer /><Pick label="コネクタ" icon={<Line size={18} vb={18}><path d="M4 9h13M16 4q-7 0-7 5 0 5 7 5" stroke="#888" /></Line>} /></Row>
            <Row><Label $w={16}>線</Label><Pick label="線の色" icon={<Swatch $c="#fa3a2d" />} /><Spacer />トピック<Pick label="トピックの色" icon={<Swatch $c="#fa3a2d" />} /></Row>
            <Row><Label $w={16}>太さ</Label><Pick label="ブランチの太さ" icon={<Dash c="#444" h={2} />} /><Spacer />点線<Pick label="ブランチの点線" icon={<Dash />} /></Row>
            <Row><Label $w={16}>矢印</Label><Pick label="矢印" icon={<Dash />} /><Spacer />形式<Pick label="形式" icon={<Line size={18} vb={18}><path d="M7 14Q7 7 14 5" strokeWidth="1.800" stroke="#333" /></Line>} /></Row>
            <Reset disabled>スタイルをリセット</Reset>
          </Section>
        </Panel>
      </Main>

      <StatusBar>
        <IconButton $w={29} aria-label="ページ一覧"><Line size={12}><rect x="5" y="4" width="7" height="8" /><path d="M2 4v8M14.500 4v8" /></Line></IconButton>
        <Rule $m={1} />
        <Combo w={65} value="ページ-1" label="ページ" clear />
        <Rule />
        <IconButton $w={33} aria-label="ページを追加"><Plus size={12} strokeWidth={1.6} /></IconButton>
        <Rule />
        <PageTab>ページ-1</PageTab>
        <Rule />
        <Spacer />
        <span>[中心トピック 101]</span>
        <Rule $h={0} $m={2} />
        <IconButton aria-label="マウス"><Line size={11}><circle cx="8" cy="8.500" r="6" /><path d="M8 2.500v6h6M2.500 8.500H8" /></Line></IconButton>
        <IconButton aria-label="マップ"><Line size={12}><path d="M1.500 3H6l4 0h4.500v10H1.500zM6 3v10M10 3v10" /></Line></IconButton>
        <IconButton aria-label="高さに合わせる"><Line size={12}><rect x="2.500" y="2" width="11" height="12" /><path d="M5 2v3h6V2M5 14v-3h6v3M2.500 8h11" /></Line></IconButton>
        <IconButton aria-label="全体表示"><Line size={12}><rect x="2" y="2" width="12" height="12" /><path d="M5 7V5h2M9 5h2v2M11 9v2H9M7 11H5V9" strokeWidth="1.600" /></Line></IconButton>
        <IconButton $w={12} aria-label="縮小"><Minus size={9} strokeWidth={1.8} /></IconButton>
        <Slider type="range" aria-label="ズーム" defaultValue={22} />
        <IconButton $w={12} aria-label="拡大"><Plus size={9} strokeWidth={1.8} /></IconButton>
        <IconButton $w={34}>100% <Caret /></IconButton>
        <IconButton $w={22} aria-label="全画面"><Maximize size={11} strokeWidth={1.8} /></IconButton>
        <IconButton $w={22} aria-label="分割"><Line size={11}><rect x="2" y="2" width="12" height="12" rx="1" /><path d="M2 8h12" /></Line></IconButton>
        <Rule $h={0} $m={1} />
      </StatusBar>

      <TaskBar>
        <App16 aria-label="スタート"><Windows /></App16>
        <App16 aria-label="検索"><Search size={15} strokeWidth={2.5} color="#d7dade" /></App16>
        <App16 aria-label="タスクビュー"><TaskView /></App16>
        <App16 aria-label="Copilot"><Copilot /></App16>
        <App16 $open aria-label="エクスプローラー"><Explorer /></App16>
        <App16 $open aria-label="Discord"><Discord /><Badge $c="#e0474a">•</Badge></App16>
        <App16 $open aria-label="Chrome"><Chrome /><Badge $c="#e2452f">1</Badge></App16>
        <App16 $open aria-label="Slack"><Slack /></App16>
        <App16 $open aria-label="LINE"><LineApp /></App16>
        <App16 $open aria-label="Notion"><Notion /></App16>
        <App16 $open aria-label="OBS"><Obs /><Badge $c="#fb0a0a" /></App16>
        <App16 $open aria-label="Filmora"><Filmora /></App16>
        <App16 $open aria-label="フォト"><Photos /></App16>
        <App16 $open aria-label="Word"><Word /></App16>
        <App16 $on aria-label="EdrawMind"><EdrawLogo size={16} /></App16>
        <Spacer />
        <Weather>
          <svg width="17" height="19" viewBox="0 0 17 19" aria-hidden>
            <path d="M4 15a4 4 0 0 1 0-7 5 5 0 0 1 9 1 3 3 0 0 1 0 6z" fill="#b7d2fa" /><path d="M11 13l2 5h-4z" fill="#2b83ee" />
            <circle cx="12" cy="5" r="5" fill="#f58a96" /><path d="M11.500 3.500l1-.8v5" stroke="#6b2430" fill="none" />
          </svg>
          <span>26°C<br />小雨</span>
        </Weather>
        <IconButton aria-label="隠れているアイコン"><ChevronUp size={11} strokeWidth={2.5} /></IconButton>
        <IconButton $w={22} aria-label="OneDrive"><Line size={12} sw={1.3}><path d="M3 12q-2-1-1.500-3T4 7q2-3.500 5-2t3 3q3 .5 2.500 3.500T3 12z" fill="#8e99a1" stroke="#8e99a1" /><path d="M2 3l12 11" stroke="#dfe4e8" /></Line></IconButton>
        <IconButton aria-label="マイク"><Mic size={12} strokeWidth={2} color="#8fc6e6" /></IconButton>
        <Ime>あ</Ime>
        <IconButton $w={22} aria-label="ネットワーク"><Line size={12} sw={1.5}><path d="M9 2H1.500v10h12V9M5 14.500h5" /><rect x="11" y="1.500" width="4" height="5" /></Line></IconButton>
        <IconButton $w={12} aria-label="音量"><Line size={11} sw={1.5}><path d="M1 6h3l4-4v12l-4-4H1zM10.500 6q1.500 2 0 4M13 4q3 4 0 8" /></Line></IconButton>
        <Clock>7:44<br />2024/08/16</Clock>
        <svg width="10" height="12" viewBox="0 0 10 12" aria-hidden><path d="M5 0q3.500 0 3.500 4v3L10 9.500H0L1.500 7V4Q1.500 0 5 0zM3.500 10.300h3Q6 12 5 12t-1.500-1.700z" fill="#8fe0fb" /></svg>
      </TaskBar>
    </Page>
  );
}
